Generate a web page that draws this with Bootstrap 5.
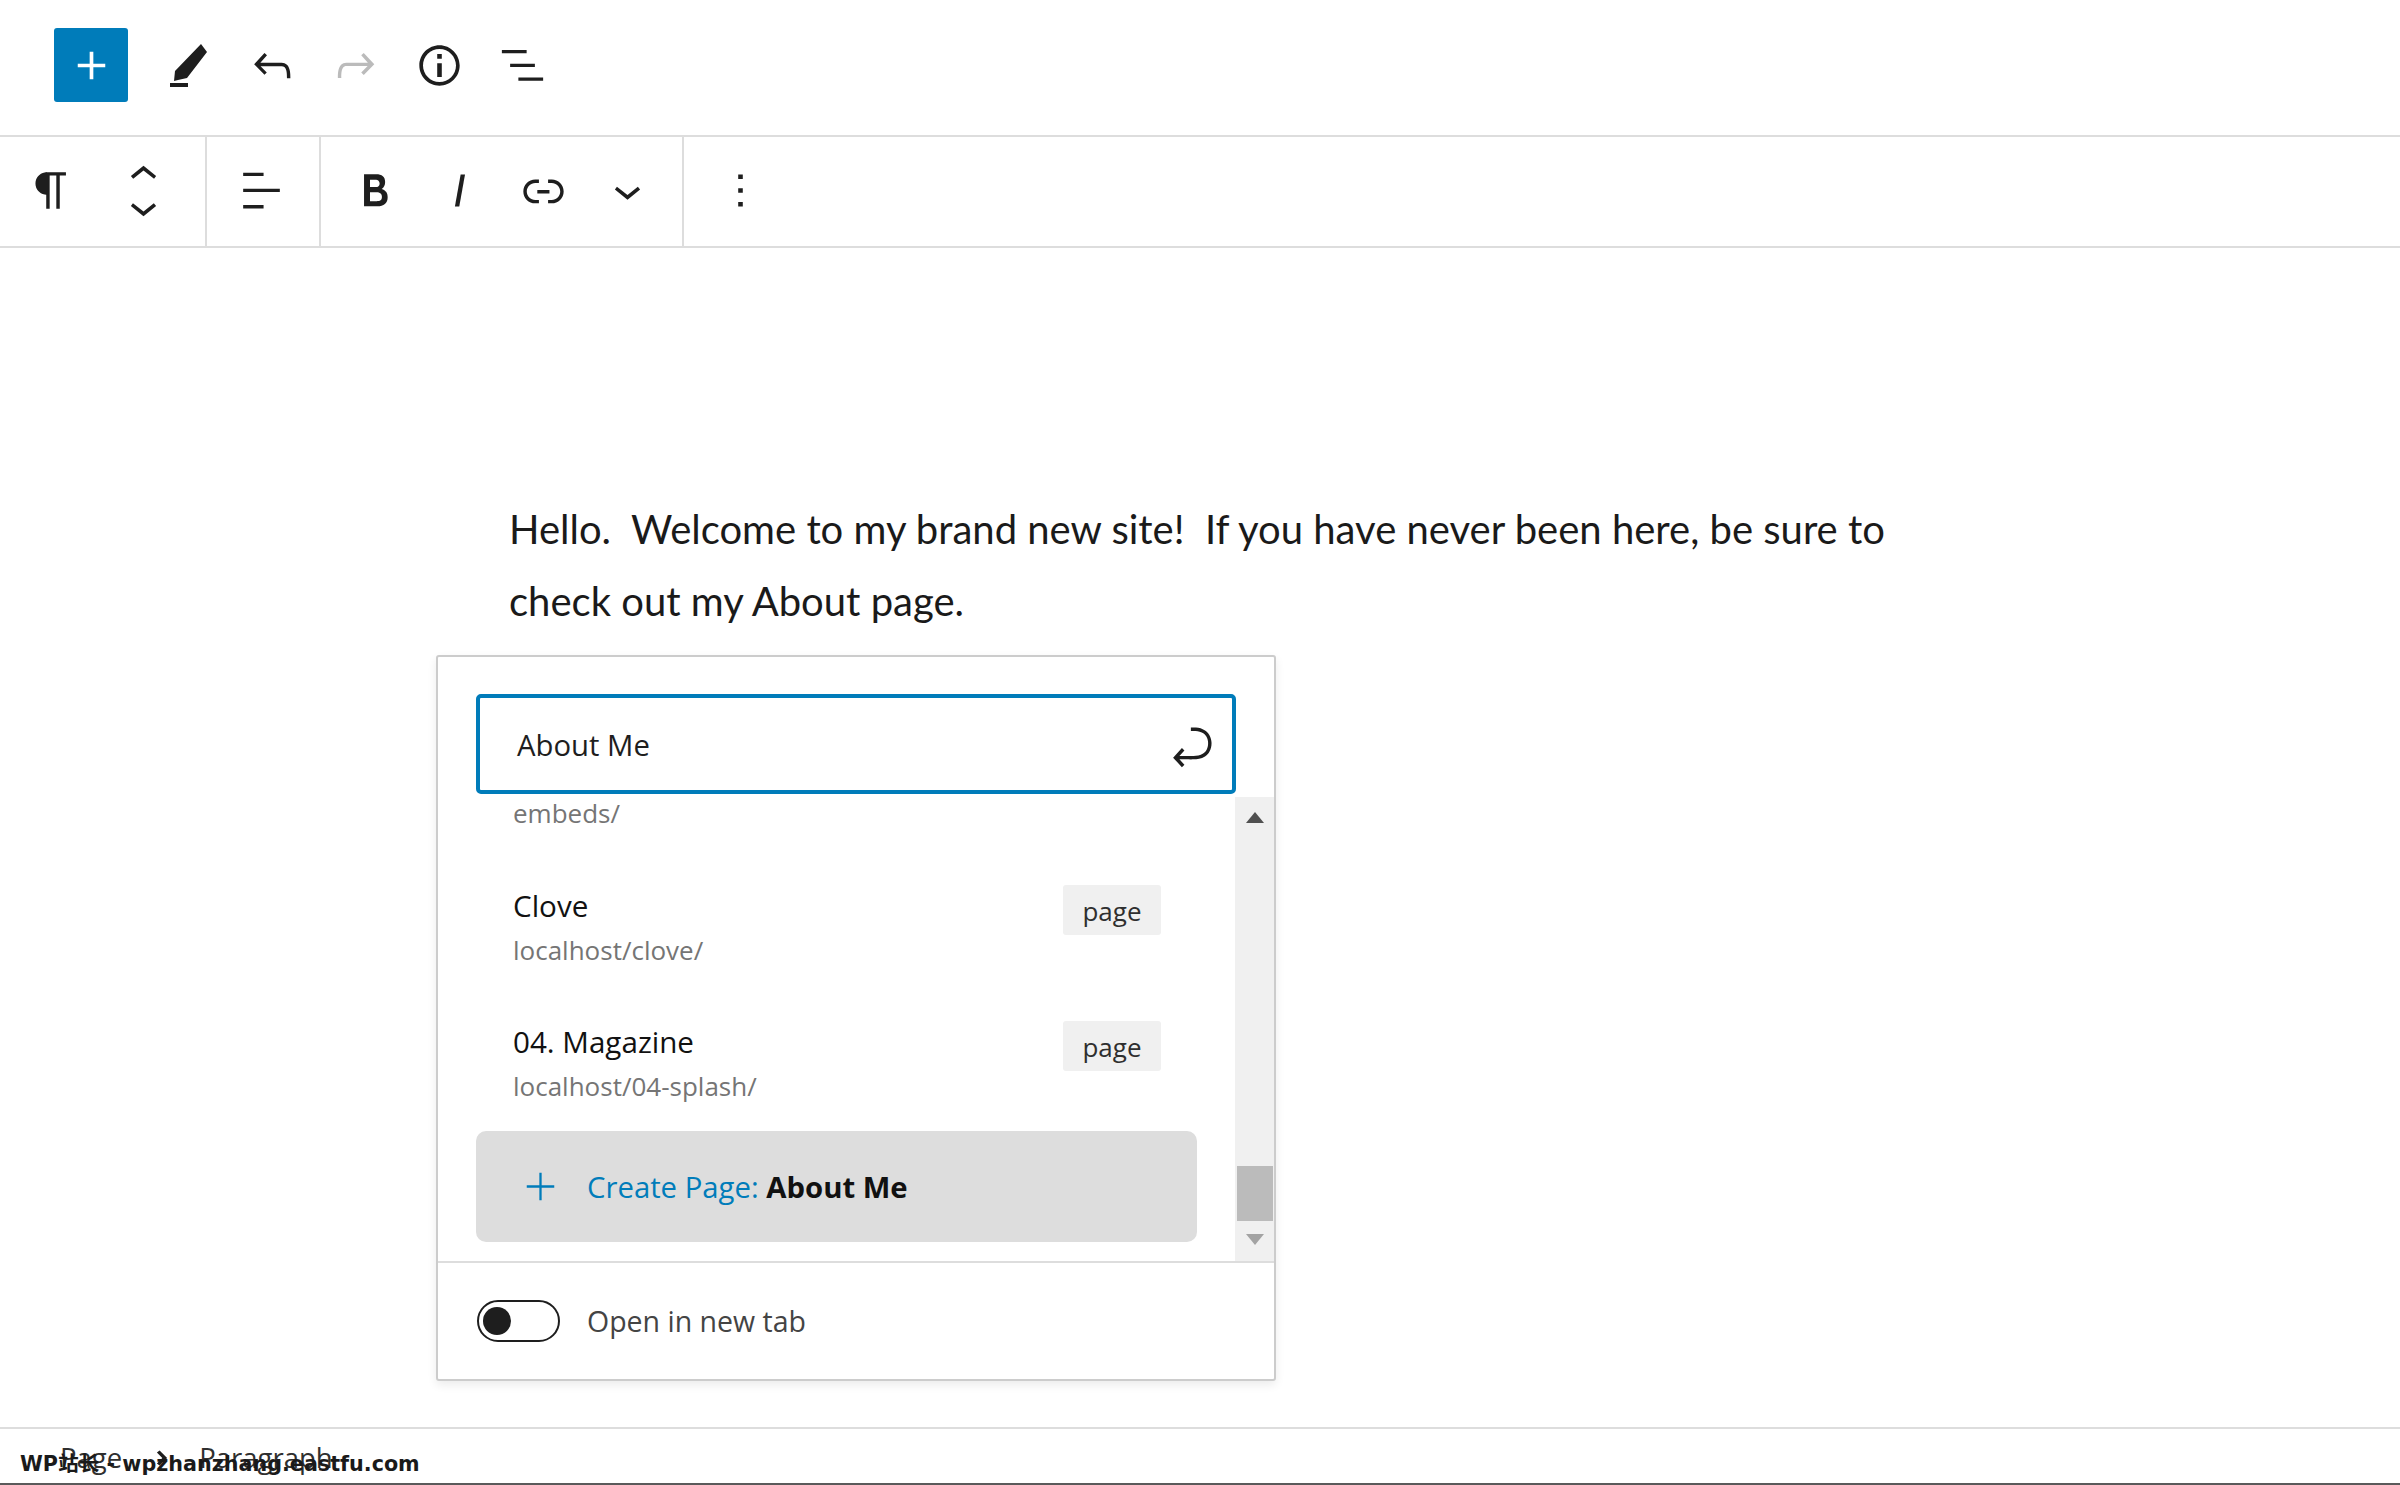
<!DOCTYPE html>
<html lang="en">
<head>
<meta charset="utf-8">
<title>Editor</title>
<link href="https://cdn.jsdelivr.net/npm/bootstrap@5.3.0/dist/css/bootstrap.min.css" rel="stylesheet">
<style>
html,body{height:100%;overflow:hidden}
body{font-family:"Open Sans","Noto Sans",sans-serif;color:#1e1e1e;background:#fff;position:relative}
svg{display:block;fill:currentColor;flex:none}
.ico{width:55px;height:55px}
.topbar{height:135px;padding-left:54px;padding-bottom:5px}
.inserter{width:74px;height:74px;background:#007cba;color:#fff;border-radius:3px;margin-right:19px}
.tool{width:83.5px;color:#1e1e1e}
.tool.off{color:#bbb}
.blockbar{height:113px;border-top:2px solid #ddd;border-bottom:2px solid #ddd}
.grp{border-right:2px solid #ddd;height:100%;padding-bottom:2px}
.g1{width:207px;padding-left:9px;gap:8px}
.g2{width:114px;padding-right:3px}
.g3{width:363px;padding-left:12px}
.g4{border-right:0;padding-left:14px}
.item{width:84px}
.mover{gap:2px}
.mover svg{width:55px;height:30px}
.canvas{padding:0 0 0 509px}
.lede{font-family:Lato,"Open Sans",sans-serif;font-size:40px;line-height:72px;width:1385px;margin:245px 0 0;color:#1a1a1a}
.pop{position:absolute;left:436px;top:655px;width:840px;height:726px;background:#fff;border:2px solid #ccc;border-radius:3px;box-shadow:0 4px 10px rgba(0,0,0,.08)}
.search{margin:37px 38px 3px;height:100px;border:4px solid #007cba;border-radius:5px;padding:0 13px 0 37px;font-size:29.3px;color:#1e1e1e}
.search span{padding-top:3px}
.search svg{margin-top:5px}
.results{height:464px}
.list{width:797px;overflow:hidden}
.row-item{padding:0 74px 0 75px;margin-bottom:50px}
.t{font-size:29.6px;line-height:44px;color:#111;margin-top:-1px}
.u{font-size:26px;line-height:42px;color:#757575;margin-top:1px}
.tag{width:98px;height:50px;background:#f0f0f0;border-radius:3px;font-size:26px;color:#2f2f2f;padding-top:3px}
.cut{padding-left:75px;font-size:26px;line-height:32px;color:#757575;margin-bottom:56px}
.create{margin:-26px 38px 0;height:111px;background:#ddd;border-radius:10px;padding-left:37px;gap:19px;font-size:29.3px;color:#007cba;padding-top:2px}
.create svg{margin-top:-2px}
.create b{color:#111}
.sbar{width:39px;background:#f0f0f0}
.arrow{width:0;height:0;border-left:9px solid transparent;border-right:9px solid transparent}
.up{border-bottom:11px solid #505050;margin-top:15px}
.thumb{width:36px;height:55px;background:#bbb;margin-top:auto}
.dn{border-top:11px solid #a3a3a3;margin:13px 0 16px}
.foot{border-top:2px solid #ddd;height:117px;padding:0 0 0 39px;gap:27px;font-size:28.5px;color:#444}
.foot span{padding-top:2px}
.sw{width:83px;height:42px;border:2px solid #1e1e1e;border-radius:21px;padding-left:4px}
.knob{width:28px;height:28px;border-radius:50%;background:#1e1e1e}
.crumbs{position:absolute;left:0;right:0;bottom:2px;height:56px;border-top:2px solid #ddd;padding:3px 0 0 60px;font-size:27.5px;color:#2f2f2f}
.crumbs svg{width:36px;height:36px;margin:0 19px 0 22px;color:#1e1e1e}
.strip{position:absolute;left:0;right:0;bottom:0;height:2px;background:#5a5a5a}
.wm{position:absolute;left:20px;top:1450px;font:700 20.7px/28px "DejaVu Sans","Noto Sans CJK SC",sans-serif;color:#1a1a1a}
</style>
</head>
<body>
<header class="topbar d-flex align-items-center">
  <div class="inserter d-flex align-items-center justify-content-center"><svg class="ico" viewBox="0 0 24 24"><path d="M18 11.2h-5.2V6h-1.6v5.2H6v1.6h5.2V18h1.6v-5.2H18z"/></svg></div>
  <div class="tool d-flex justify-content-center"><svg width="37" height="43" viewBox="0 0 37 43"><path d="M31 0l6 8-20 26-9 2-4 1 1-10z"/><rect y="39" width="18" height="4"/></svg></div>
  <div class="tool d-flex justify-content-center"><svg class="ico" viewBox="0 0 24 24"><path d="M18.3 11.7c-.6-.6-1.4-.9-2.3-.9H6.7l2.9-3.3-1.1-1-4.5 5L8.5 16l1-1-2.7-2.7H16c.5 0 .9.2 1.3.5 1 1 1 3.4 1 4.5v.3h1.5v-.2c0-1.5 0-4.3-1.5-5.7z"/></svg></div>
  <div class="tool off d-flex justify-content-center"><svg class="ico" viewBox="0 0 24 24"><path d="M15.6 6.5l-1.1 1 2.9 3.3H8c-.9 0-1.7.3-2.3.9-1.4 1.5-1.4 4.2-1.4 5.6v.2h1.5v-.3c0-1.1 0-3.5 1-4.5.3-.3.7-.5 1.3-.5h9.2L14.5 15l1.1 1.1 4.6-4.6-4.6-5z"/></svg></div>
  <div class="tool d-flex justify-content-center"><svg class="ico" viewBox="0 0 24 24"><path d="M12 3.2c-4.8 0-8.8 3.9-8.8 8.8 0 4.8 3.9 8.8 8.8 8.8 4.8 0 8.8-3.9 8.8-8.8 0-4.8-4-8.8-8.8-8.8zm0 16c-4 0-7.2-3.3-7.2-7.2C4.8 8 8 4.8 12 4.8s7.2 3.3 7.2 7.2c0 4-3.2 7.2-7.2 7.2zM11 17h2v-6h-2v6zm0-8h2V7h-2v2z"/></svg></div>
  <div class="tool d-flex justify-content-center"><svg class="ico" viewBox="0 0 24 24"><path d="M13.8 5.2H3v1.5h10.8V5.2zm-3.6 12v1.5H21v-1.5H10.2zm7.2-6H6.6v1.5h10.8v-1.5z"/></svg></div>
</header>
<nav class="blockbar d-flex">
  <div class="grp g1 d-flex align-items-center">
    <div class="item d-flex justify-content-center"><svg class="ico" viewBox="0 0 24 24"><path d="M18.3 4H9.9v-.1l-.9.2c-2.3.4-4 2.4-4 4.8s1.7 4.4 4 4.8l.7.1V20h1.5V5.5h2.9V20h1.5V5.5h2.7V4z"/></svg></div>
    <div class="item mover d-flex flex-column align-items-center">
      <svg viewBox="0 5.5 24 13"><path d="M6.5 12.4L12 8l5.5 4.4-.9 1.2L12 10l-4.5 3.6-1-1.2z"/></svg>
      <svg viewBox="0 5.5 24 13"><path d="M17.5 11.6L12 16l-5.5-4.4.9-1.2L12 14l4.5-3.6 1 1.2z"/></svg>
    </div>
  </div>
  <div class="grp g2 d-flex align-items-center justify-content-center"><svg class="ico" viewBox="0 0 24 24"><path d="M4 19.8h8.9v-1.5H4v1.5zm8.9-15.6H4v1.5h8.9V4.2zm-8.9 7v1.5h16v-1.5H4z"/></svg></div>
  <div class="grp g3 d-flex align-items-center">
    <div class="item d-flex justify-content-center"><svg class="ico" viewBox="0 0 24 24"><path d="M14.7 11.3c1-.6 1.5-1.6 1.5-3 0-2.3-1.3-3.4-4-3.4H7v14h5.8c1.4 0 2.5-.3 3.3-1 .8-.7 1.2-1.7 1.2-2.9.1-1.9-.8-3.1-2.6-3.7zm-5.1-4h2.3c.6 0 1.1.1 1.4.4.3.3.5.7.5 1.2s-.2 1-.5 1.2c-.3.3-.8.4-1.4.4H9.6V7.3zm4.6 9c-.4.3-1 .4-1.7.4H9.6v-3.9h2.9c.7 0 1.3.2 1.7.5.4.3.6.8.6 1.5s-.2 1.2-.6 1.5z"/></svg></div>
    <div class="item d-flex justify-content-center"><svg class="ico" viewBox="0 0 24 24"><path d="M12.5 5L10 19h1.9l2.5-14z"/></svg></div>
    <div class="item d-flex justify-content-center"><svg class="ico" viewBox="0 0 24 24"><path d="M15.6 7.2H14v1.5h1.6c2 0 3.7 1.7 3.7 3.7s-1.7 3.7-3.7 3.7H14v1.5h1.6c2.8 0 5.2-2.3 5.2-5.2 0-2.9-2.3-5.2-5.2-5.2zM4.7 12.4c0-2 1.7-3.7 3.7-3.7H10V7.2H8.4c-2.9 0-5.2 2.3-5.2 5.2 0 2.9 2.3 5.2 5.2 5.2H10v-1.5H8.4c-2 0-3.7-1.7-3.7-3.7zm4.6.9h5.3v-1.5H9.3v1.5z"/></svg></div>
    <div class="item d-flex justify-content-center"><svg class="ico" viewBox="0 0 24 24"><path d="M17.5 11.6L12 16l-5.5-4.4.9-1.2L12 14l4.5-3.6 1 1.2z"/></svg></div>
  </div>
  <div class="grp g4 d-flex align-items-center">
    <div class="item d-flex justify-content-center"><svg class="ico" viewBox="0 0 24 24"><path d="M13 19h-2v-2h2v2zm0-6h-2v-2h2v2zm0-6h-2V5h2v2z"/></svg></div>
  </div>
</nav>
<main class="canvas">
  <p class="lede">Hello.&nbsp; Welcome to my brand new site!&nbsp; If you have never been here, be sure to check out my About page.</p>
</main>
<section class="pop">
  <div class="search d-flex align-items-center justify-content-between">
    <span>About Me</span>
    <svg class="ico" viewBox="0 0 24 24"><path d="M6.734 16.106l2.176-2.38-1.093-1.028-3.846 4.158 3.846 4.157 1.093-1.027-2.176-2.38h2.811c1.125 0 2.25.03 3.374 0 1.428-.001 3.362-.25 4.963-1.277 1.66-1.065 2.868-2.906 2.868-5.859 0-2.479-1.327-4.896-3.65-5.93-1.82-.813-3.044-.8-4.806-.788l-.567.002v1.5c.184 0 .368 0 .553-.002 1.82-.007 2.704-.014 4.21.657 1.854.827 2.76 2.657 2.76 4.561 0 2.472-.973 3.824-2.178 4.596-1.258.807-2.864 1.04-4.163 1.04h-.02c-1.115.03-2.229 0-3.344 0H6.734z"/></svg>
  </div>
  <div class="results d-flex">
    <div class="list">
      <div class="cut">embeds/</div>
      <div class="row-item d-flex justify-content-between align-items-start">
        <div><div class="t">Clove</div><div class="u">localhost/clove/</div></div>
        <span class="tag d-flex align-items-center justify-content-center">page</span>
      </div>
      <div class="row-item d-flex justify-content-between align-items-start">
        <div><div class="t">04. Magazine</div><div class="u">localhost/04-splash/</div></div>
        <span class="tag d-flex align-items-center justify-content-center">page</span>
      </div>
      <div class="create d-flex align-items-center">
        <svg class="ico" viewBox="0 0 24 24"><path d="M18 11.5h-5.5V6h-1v5.5H6v1h5.5V18h1v-5.5H18z"/></svg>
        <span>Create Page: <b>About Me</b></span>
      </div>
    </div>
    <div class="sbar d-flex flex-column align-items-center">
      <div class="arrow up"></div>
      <div class="thumb"></div>
      <div class="arrow dn"></div>
    </div>
  </div>
  <div class="foot d-flex align-items-center">
    <div class="sw d-flex align-items-center"><div class="knob"></div></div>
    <span>Open in new tab</span>
  </div>
</section>
<footer class="crumbs d-flex align-items-center">
  <span>Page</span>
  <svg viewBox="0 0 24 24"><path d="M10.4 7L8.6 8.3l3.6 3.7-3.6 3.7 1.8 1.3 5-5z"/></svg>
  <span>Paragraph</span>
</footer>
<div class="strip"></div>
<div class="wm">WP站长 - wpzhanzhang.eastfu.com</div>
<script src="https://cdn.jsdelivr.net/npm/bootstrap@5.3.0/dist/js/bootstrap.bundle.min.js"></script>
</body>
</html>
